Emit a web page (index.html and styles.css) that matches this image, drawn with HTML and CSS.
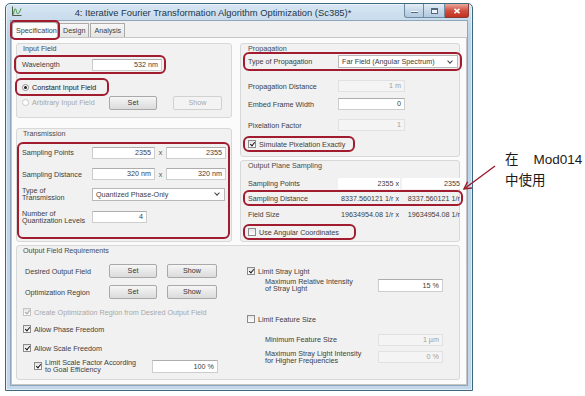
FILE: index.html
```html
<!DOCTYPE html>
<html lang="en">
<head>
    <meta charset="UTF-8">
    <meta name="viewport" content="width=device-width, initial-scale=1.0">
    <title>Iterative Fourier Transformation Algorithm Optimization</title>
    <link rel="stylesheet" href="styles.css">
</head>
<body>
<div class="screen">
    <div class="window">
        <div class="titlebar">
            <svg class="app-icon" viewBox="0 0 11 11">
                <path d="M1.5 0.5 V9.5 H10.5" stroke="#4b5f45" stroke-width="1" fill="none"/>
                <path d="M2.5 8.5 C3.5 1.5, 4.5 1.5, 5.5 5.5 S8 8, 10 2.5" stroke="#3c9a35" stroke-width="1" fill="none"/>
            </svg>
            <div class="title">4: Iterative Fourier Transformation Algorithm Optimization (Sc385)*</div>
            <div class="caption">
                <span class="cbtn min"><i></i></span>
                <span class="cbtn max"><i></i></span>
                <span class="cbtn close">
                    <svg viewBox="0 0 8 6"><path d="M1.5 0.8 L6.5 5.2 M6.5 0.8 L1.5 5.2" stroke="#fff" stroke-width="1.6"/></svg>
                </span>
            </div>
        </div>

        <div class="client">
            <div class="tabs">
                <span class="tab active mark">Specification</span>
                <span class="tab">Design</span>
                <span class="tab">Analysis</span>
            </div>

            <div class="pane">
                <div class="columns">
                    <!-- left column -->
                    <div class="col col-left">
                        <div class="group g-input">
                            <div class="gtitle">Input Field</div>
                            <div class="row mark r-wave">
                                <span class="lbl">Wavelength</span>
                                <span class="field w70">532 nm</span>
                            </div>
                            <div class="row mark r-const">
                                <span class="radio on"></span><span class="dark">Constant Input Field</span>
                            </div>
                            <div class="row r-arb">
                                <span class="lbl-arb dis"><span class="radio off"></span>Arbitrary Input Field</span>
                                <span class="btn w48">Set</span>
                                <span class="btn dis w49 gap16">Show</span>
                            </div>
                        </div>

                        <div class="group g-trans">
                            <div class="gtitle">Transmission</div>
                            <div class="mark t-box">
                                <div class="row t-row h11">
                                    <span class="lbl">Sampling Points</span>
                                    <span class="field w63">2355</span>
                                    <span class="times">x</span>
                                    <span class="field w60">2355</span>
                                </div>
                                <div class="row t-row h12 mt10">
                                    <span class="lbl">Sampling Distance</span>
                                    <span class="field w63">320 nm</span>
                                    <span class="times">x</span>
                                    <span class="field w60">320 nm</span>
                                </div>
                                <div class="row t-row h16 mt6">
                                    <span class="lbl two">Type of<br>Transmission</span>
                                    <span class="select w133">Quantized Phase-Only</span>
                                </div>
                                <div class="row t-row h16 mt7">
                                    <span class="lbl two">Number of<br>Quantization Levels</span>
                                    <span class="field w55">4</span>
                                </div>
                            </div>
                        </div>
                    </div>

                    <!-- right column -->
                    <div class="col col-right">
                        <div class="group g-prop">
                            <div class="gtitle pad7">Propagation</div>
                            <div class="row mark p-type">
                                <span class="lbl90">Type of Propagation</span>
                                <span class="select w120">Far Field (Angular Spectrum)</span>
                            </div>
                            <div class="row p-row mt12">
                                <span class="lbl90">Propagation Distance</span>
                                <span class="field dis w67">1 m</span>
                            </div>
                            <div class="row p-row mt6">
                                <span class="lbl90">Embed Frame Width</span>
                                <span class="field w67">0</span>
                            </div>
                            <div class="row p-row mt9">
                                <span class="lbl90">Pixelation Factor</span>
                                <span class="field dis w67">1</span>
                            </div>
                            <div class="row mark p-sim">
                                <span class="check on"></span>Simulate Pixelation Exactly
                            </div>
                        </div>

                        <div class="group g-ops">
                            <div class="gtitle pad7">Output Plane Sampling</div>
                            <div class="row p-row mt6">
                                <span class="lbl90">Sampling Points</span>
                                <span class="cell white">2355 x</span>
                                <span class="cell2 white">2355</span>
                            </div>
                            <div class="row mark o-mark mt4">
                                <span class="lbl90">Sampling Distance</span>
                                <span class="cell">8337.560121 1/r x</span>
                                <span class="cell2">8337.560121 1/r</span>
                            </div>
                            <div class="row p-row mt5 h10">
                                <span class="lbl90">Field Size</span>
                                <span class="cell">19634954.08 1/r x</span>
                                <span class="cell2">19634954.08 1/r</span>
                            </div>
                            <div class="row mark o-ang">
                                <span class="check"></span>Use Angular Coordinates
                            </div>
                        </div>
                    </div>
                </div>

                <div class="group g-req">
                    <div class="gtitle">Output Field Requirements</div>
                    <div class="req-cols">
                        <div class="req-left">
                            <div class="row q-btns mt8">
                                <span class="lbl86">Desired Output Field</span>
                                <span class="btn w48">Set</span>
                                <span class="btn w50 gap10">Show</span>
                            </div>
                            <div class="row q-btns mt7">
                                <span class="lbl86">Optimization Region</span>
                                <span class="btn w48">Set</span>
                                <span class="btn w50 gap10">Show</span>
                            </div>
                            <div class="row h10 mt8 dis">
                                <span class="check on dis"></span>Create Optimization Region from Desired Output Field
                            </div>
                            <div class="row h10 mt7">
                                <span class="check on"></span>Allow Phase Freedom
                            </div>
                            <div class="row h10 mt9">
                                <span class="check on"></span>Allow Scale Freedom
                            </div>
                            <div class="row h16 mt5 q-limit">
                                <span class="check on"></span>
                                <span class="two lbl107">Limit Scale Factor According<br>to Goal Efficiency</span>
                                <span class="field w66 h13">100 %</span>
                            </div>
                        </div>
                        <div class="req-right">
                            <div class="row h10 mt10">
                                <span class="check on"></span>Limit Stray Light
                            </div>
                            <div class="row h16 mt1 indent">
                                <span class="two lbl113">Maximum Relative Intensity<br>of Stray Light</span>
                                <span class="field w65 h13">15 %</span>
                            </div>
                            <div class="row h10 mt21">
                                <span class="check"></span>Limit Feature Size
                            </div>
                            <div class="row h11 mt10 indent">
                                <span class="lbl113">Minimum Feature Size</span>
                                <span class="field dis w65">1 µm</span>
                            </div>
                            <div class="row h16 mt4 indent">
                                <span class="two lbl113">Maximum Stray Light Intensity<br>for Higher Frequencies</span>
                                <span class="field dis w65">0 %</span>
                            </div>
                        </div>
                    </div>
                </div>
            </div>
        </div>
    </div>

    <div class="note">
        <svg class="arrow" viewBox="0 0 40 32">
            <path d="M35 4 L4 27" stroke="#9b1b2c" stroke-width="1.4" fill="none"/>
            <path d="M12 26 L4 27 L7.5 19.7" stroke="#9b1b2c" stroke-width="1.4" fill="none"/>
        </svg>
        <p>在&nbsp;&nbsp;&nbsp; Mod014<br>中使用</p>
    </div>
</div>
</body>
</html>
```

FILE: styles.css
```css
* {
    box-sizing: border-box;
}
body {
    margin: 0;
    background: #fff;
    font: 7.2px "Liberation Sans", Arial, sans-serif;
    color: #3d3d3d;
}
.screen {
    position: relative;
    width: 585px;
    height: 396px;
    overflow: hidden;
    display: flex;
    align-items: flex-start;
}

/* window frame */
.window {
    margin: 3px 0 0 5px;
    width: 468px;
    height: 388px;
    border: 1px solid #3e687e;
    border-radius: 5px 5px 0 0;
    background: linear-gradient(#d6e5f2, #bcd3e7 30px, #c2d7ea);
    box-shadow: inset 0 0 0 1px rgba(255, 255, 255, 0.55);
    padding: 0 4px 4px 4px;
    display: flex;
    flex-direction: column;
}
.titlebar {
    height: 16px;
    display: flex;
    align-items: flex-start;
}
.app-icon {
    width: 11px;
    height: 11px;
    margin: 2px 0 0 1px;
    flex: none;
}
.title {
    flex: 1;
    text-align: center;
    font-size: 9.4px;
    line-height: 14px;
    margin-top: 2px;
    color: #22364a;
    white-space: nowrap;
}
.caption {
    display: flex;
    margin-right: -1px;
}
.cbtn {
    height: 14px;
    border: 1px solid #6f8aa3;
    border-top: none;
    background: linear-gradient(#e3edf6, #c6d8ea 50%, #b3c9df);
    display: flex;
    align-items: center;
    justify-content: center;
}
.cbtn.min {
    width: 20px;
    border-radius: 0 0 0 3px;
}
.cbtn.min i {
    width: 7px;
    height: 2px;
    margin-top: 3px;
    background: #fff;
    border: 1px solid #55697d;
    border-width: 0 0 1px 0;
}
.cbtn.max {
    width: 21px;
    border-left: none;
}
.cbtn.max i {
    width: 7px;
    height: 6px;
    border: 1px solid #55697d;
    border-top-width: 2px;
    background: #eef4fa;
}
.cbtn.close {
    width: 24px;
    border-left: none;
    border-color: #8a3a34;
    border-radius: 0 0 3px 0;
    background: linear-gradient(#e9a99b, #d2503f 50%, #c3301f);
}
.cbtn.close svg {
    width: 8px;
    height: 6px;
}

/* client area */
.client {
    flex: 1;
    background: #f0f0f0;
    border: 1px solid #8ea6bb;
    display: flex;
    flex-direction: column;
}
.tabs {
    height: 16px;
    display: flex;
    align-items: flex-end;
    padding-left: 1px;
}
.tab {
    height: 14px;
    line-height: 13px;
    padding: 0 3px;
    border: 1px solid #ababab;
    border-bottom: none;
    background: linear-gradient(#f6f6f6, #e4e4e4);
    margin-right: 1px;
}
.tab.active {
    height: 16px;
    line-height: 15px;
    background: #fbfbfb;
    width: 46px;
    position: relative;
    z-index: 1;
    margin-bottom: -1px;
}
.tab.mark {
    outline-offset: 0;
}
.pane {
    flex: 1;
    background: #fbfbfb;
    border: 1px solid #c5c5c5;
    padding: 5px 0 0 4px;
}
.columns {
    display: flex;
    gap: 8px;
}
.col {
    display: flex;
    flex-direction: column;
}
.col-left {
    width: 216px;
    gap: 10px;
}
.col-right {
    width: 220px;
    gap: 3px;
}

/* group boxes */
.group {
    border: 1px solid #d8d8d8;
    border-radius: 3px;
    background: #f1f1f1;
}
.gtitle {
    height: 10px;
    line-height: 10px;
    padding-left: 6px;
    color: #4a4a4a;
}
.gtitle.pad7 {
    padding-left: 7px;
}
.g-input {
    height: 75px;
}
.g-trans {
    height: 114px;
}
.g-prop {
    height: 114px;
}
.g-ops {
    height: 82px;
}
.g-req {
    width: 444px;
    height: 135px;
    margin-top: 3px;
}

/* red annotation boxes */
.mark {
    outline: 2px solid #a11c2f;
    outline-offset: 1px;
    border-radius: 3px;
}

/* rows and controls */
.row {
    display: flex;
    align-items: center;
    white-space: nowrap;
}
.h10 { height: 10px; }
.h11 { height: 11px; }
.h12 { height: 12px; }
.h16 { height: 16px; }
.mt1 { margin-top: 1px; }
.mt4 { margin-top: 4px; }
.mt5 { margin-top: 5px; }
.mt6 { margin-top: 6px; }
.mt7 { margin-top: 7px; }
.mt8 { margin-top: 8px; }
.mt9 { margin-top: 9px; }
.mt10 { margin-top: 10px; }
.mt12 { margin-top: 12px; }
.mt21 { margin-top: 21px; }

.lbl { width: 70px; flex: none; }
.lbl90 { width: 90px; flex: none; }
.lbl86 { width: 86px; flex: none; padding-left: 2px; }
.lbl107 { width: 107px; flex: none; }
.lbl113 { width: 113px; flex: none; }
.two {
    line-height: 7.5px;
}
.dark {
    color: #222;
}
.dis {
    color: #a8a8a8;
}

.field {
    height: 12px;
    line-height: 10px;
    background: #fff;
    border: 1px solid #cdcdcd;
    border-top-color: #adadad;
    text-align: right;
    padding: 0 3px;
    flex: none;
}
.field.dis {
    background: #f4f4f4;
    border-color: #e1e1e1;
    color: #a0a0a0;
}
.field.h13 { height: 13px; line-height: 11px; }
.w55 { width: 55px; }
.w60 { width: 60px; }
.w63 { width: 63px; }
.w65 { width: 65px; }
.w66 { width: 66px; }
.w67 { width: 67px; }
.w70 { width: 70px; }
.times {
    width: 11px;
    text-align: center;
    color: #555;
}

.select {
    height: 13px;
    line-height: 11px;
    background: #fff;
    border: 1px solid #b8b8b8;
    padding: 0 3px;
    display: flex;
    justify-content: space-between;
    align-items: center;
    flex: none;
}
.select::after {
    content: "";
    width: 3px;
    height: 3px;
    border: solid #444;
    border-width: 0 1px 1px 0;
    transform: rotate(45deg);
    margin: -2px 2px 0 0;
}
.w120 { width: 120px; }
.w133 { width: 133px; }

.btn {
    height: 14px;
    line-height: 12px;
    text-align: center;
    border: 1px solid #a9a9a9;
    border-radius: 2px;
    background: linear-gradient(#f6f6f6, #e8e8e8 50%, #dbdbdb);
    color: #333;
    flex: none;
}
.btn.dis {
    color: #a8a8a8;
    border-color: #d0d0d0;
    background: #f3f3f3;
}
.w48 { width: 48px; }
.w49 { width: 49px; }
.w50 { width: 50px; }
.gap10 { margin-left: 10px; }
.gap16 { margin-left: 16px; }

.check {
    width: 8px;
    height: 8px;
    border: 1px solid #8c8c8c;
    background: linear-gradient(#e4e4e4, #fff);
    margin-right: 3px;
    position: relative;
    flex: none;
}
.check.on::after {
    content: "";
    position: absolute;
    left: 1.6px;
    top: -0.2px;
    width: 2px;
    height: 4px;
    border: solid #1b1b1b;
    border-width: 0 1.4px 1.4px 0;
    transform: rotate(40deg);
}
.check.dis {
    border-color: #c4c4c4;
}
.check.dis::after {
    border-color: #a8a8a8;
}
.radio {
    width: 7px;
    height: 7px;
    border-radius: 50%;
    border: 1px solid #8c8c8c;
    background: #fff;
    margin-right: 3px;
    display: flex;
    align-items: center;
    justify-content: center;
    flex: none;
}
.radio.on::after {
    content: "";
    width: 3px;
    height: 3px;
    border-radius: 50%;
    background: #1e1e1e;
}
.radio.off {
    border-color: #c8c8c8;
}

/* Input Field group */
.r-wave {
    margin-top: 4px;
    width: 146px;
    height: 13px;
    padding-left: 5px;
}
.r-const {
    margin: 10px 0 0 1px;
    width: 88px;
    height: 12px;
    padding-left: 4px;
}
.r-arb {
    margin-top: 3px;
    height: 13px;
    padding-left: 5px;
}
.lbl-arb {
    width: 87px;
    display: flex;
    align-items: center;
    flex: none;
}

/* Transmission group */
.t-box {
    margin: 6px 0 0 3px;
    width: 207px;
    height: 91px;
    padding: 2px 0 0 2px;
}

/* Propagation group */
.p-type {
    margin: 1px 0 0 5px;
    width: 213px;
    height: 13px;
    padding-left: 2px;
}
.p-row {
    padding-left: 7px;
    height: 12px;
}
.p-sim {
    margin: 8px 0 0 5px;
    width: 106px;
    height: 10px;
    padding-left: 2px;
}

/* Output Plane Sampling group */
.cell {
    width: 62px;
    text-align: right;
    padding-right: 1px;
    flex: none;
}
.cell2 {
    width: 58px;
    margin-left: 2px;
    text-align: right;
    flex: none;
}
.white {
    background: #fff;
    height: 11px;
    line-height: 11px;
}
.o-mark {
    margin-left: 5px;
    width: 214px;
    height: 10px;
    padding-left: 2px;
}
.o-ang {
    margin: 7px 0 0 5px;
    width: 107px;
    height: 10px;
    padding-left: 2px;
}

/* Output Field Requirements group */
.req-cols {
    display: flex;
}
.req-left {
    width: 230px;
    padding-left: 6px;
}
.req-right {
    flex: 1;
}
.q-btns {
    height: 14px;
}
.q-limit {
    padding-left: 11px;
}
.indent {
    padding-left: 18px;
}

/* annotation beside the window */
.note {
    margin: 149px 0 0 32px;
    font: 13.5px/21px "Liberation Sans", "Noto Sans CJK SC", sans-serif;
    color: #1a1a1a;
}
.note p {
    margin: 0;
    white-space: nowrap;
}
.arrow {
    position: absolute;
    left: 460px;
    top: 162px;
    width: 40px;
    height: 32px;
}
```
